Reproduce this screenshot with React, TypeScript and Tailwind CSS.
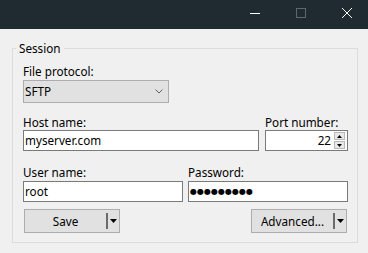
import type { ReactNode } from "react";

function Label({ children }: { children: ReactNode }) {
  return <div className="h-[15px] leading-[15px] whitespace-nowrap">{children}</div>;
}

function TextBox({ children, className = "" }: { children?: ReactNode; className?: string }) {
  return (
    <div
      className={`flex h-[21px] items-center border border-[#7a7a7a] bg-white pl-[1px] leading-[15px] ${className}`}
    >
      {children}
    </div>
  );
}

function SplitButton({ label }: { label: string }) {
  return (
    <div className="flex h-[24px] w-[96px] items-center border border-[#adadad] bg-[#e1e1e1]">
      <span className="w-[81px] text-center leading-[15px]">{label}</span>
      <span className="h-[16px] w-[2px] bg-[#6a6a6a]" />
      <span className="flex flex-1 justify-center">
        <svg width="7" height="4" viewBox="0 0 7 4">
          <path d="M0 0h7L3.5 4z" fill="#000" />
        </svg>
      </span>
    </div>
  );
}

function SpinArrow({ up }: { up?: boolean }) {
  return (
    <div className="flex h-[8px] w-[11px] items-center justify-center border border-[#b9b9b9] bg-[#e8e8e8]">
      <svg width="5" height="3" viewBox="0 0 5 3">
        <path d={up ? "M0 3h5L2.5 0z" : "M0 0h5L2.5 3z"} fill="#000" />
      </svg>
    </div>
  );
}

export default function App() {
  return (
    <div className="h-[253px] w-[368px] overflow-hidden bg-[#f0f0f0] font-['Noto_Sans',sans-serif] text-[11.7px] text-black">
      {/* title bar */}
      <div className="flex h-[29px] items-start justify-end gap-[36px] bg-[#202a31] pr-[16px] pt-[8px]">
        <svg width="10" height="10" viewBox="0 0 10 10">
          <path d="M0 5.5h11" stroke="#fff" strokeWidth="1" />
        </svg>
        <svg width="10" height="10" viewBox="0 0 10 10">
          <rect x="0.5" y="0.5" width="9" height="9" fill="none" stroke="#5f666c" />
        </svg>
        <svg width="10" height="10" viewBox="0 0 10 10">
          <path d="M0 0L10 10M10 0L0 10" stroke="#fff" strokeWidth="1" />
        </svg>
      </div>

      <fieldset className="mx-[12px] mt-[11px] w-[346px] border border-[#dcdcdc]">
        <legend className="ml-[3px] px-[3px] leading-[16px]">Session</legend>
        <div className="pb-[9px] pl-[10px] pr-[9px] pt-[8px]">
          <Label>File protocol:</Label>
          <div className="mt-[1px] flex h-[23px] w-[146px] items-center justify-between border border-[#adadad] bg-[#e1e1e1] pl-[1px] pr-[5px] leading-[15px]">
            <span>SFTP</span>
            <svg width="8" height="5" viewBox="0 0 8 5">
              <polyline points="0.5,0.5 4,4 7.5,0.5" fill="none" stroke="#606060" strokeWidth="1" />
            </svg>
          </div>

          <div className="mt-[12px] flex gap-[6px]">
            <div className="w-[236px]">
              <Label>Host name:</Label>
              <TextBox>myserver.com</TextBox>
            </div>
            <div className="w-[83px]">
              <Label>Port number:</Label>
              <TextBox className="justify-end pr-[2px]">
                <span className="mr-[3px]">22</span>
                <div className="flex flex-col gap-[1px]">
                  <SpinArrow up />
                  <SpinArrow />
                </div>
              </TextBox>
            </div>
          </div>

          <div className="mt-[14px] flex gap-[5px]">
            <div className="w-[160px]">
              <Label>User name:</Label>
              <TextBox className="mt-[1px]">root</TextBox>
            </div>
            <div className="w-[160px]">
              <Label>Password:</Label>
              <TextBox className="mt-[1px]">
                <span className="flex font-['DejaVu_Sans',sans-serif] text-[8px]">
                  {Array.from({ length: 9 }).map((_, i) => (
                    <span key={i} className="w-[7px] text-center">
                      ●
                    </span>
                  ))}
                </span>
              </TextBox>
            </div>
          </div>

          <div className="mt-[7px] flex justify-between px-[1px]">
            <SplitButton label="Save" />
            <SplitButton label="Advanced..." />
          </div>
        </div>
      </fieldset>
    </div>
  );
}
